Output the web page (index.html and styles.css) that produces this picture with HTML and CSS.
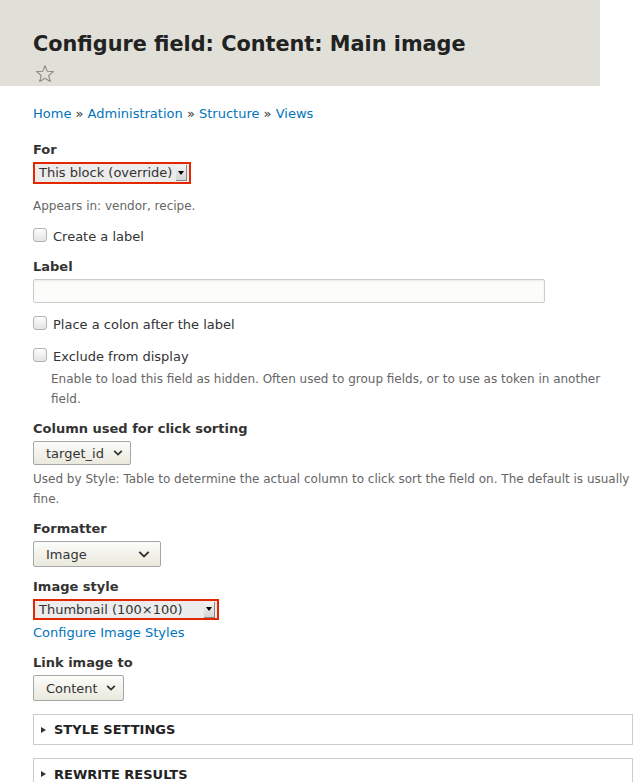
FILE: index.html
```html
<!DOCTYPE html>
<html lang="en">
<head>
<meta charset="utf-8">
<title>Configure field</title>
<link rel="stylesheet" href="styles.css">
</head>
<body>
<header class="page-head">
  <h1 class="title">Configure field: Content: Main image</h1>
  <svg class="star" width="20" height="20" viewBox="0 0 20 20" aria-hidden="true">
    <path d="M10 1.6 L12.3 7.3 L18.4 7.6 L13.7 11.5 L15.3 17.5 L10 14.2 L4.7 17.5 L6.3 11.5 L1.6 7.6 L7.7 7.3 Z" fill="none" stroke="#8e8e86" stroke-width="1.1" stroke-linejoin="round"/>
  </svg>
</header>
<main class="content">
  <nav class="breadcrumb">
    <a href="#">Home</a> » <a href="#">Administration</a> » <a href="#">Structure</a> » <a href="#">Views</a>
  </nav>

  <div class="item item-for">
    <div class="label">For</div>
    <div class="oldselect w-for"><span class="os-text">This block (override)</span><span class="os-btn"><span class="tri"></span></span></div>
    <div class="desc desc-appears">Appears in: vendor, recipe.</div>
  </div>

  <div class="check check-create"><span class="box"></span><span class="check-text">Create a label</span></div>

  <div class="item item-label">
    <div class="label">Label</div>
    <div class="textinput"></div>
  </div>

  <div class="check check-colon"><span class="box"></span><span class="check-text">Place a colon after the label</span></div>

  <div class="check check-exclude"><span class="box"></span><span class="check-text">Exclude from display</span></div>
  <div class="desc desc-indent">Enable to load this field as hidden. Often used to group fields, or to use as token in another field.</div>

  <div class="item item-col">
    <div class="label">Column used for click sorting</div>
    <div class="select w-target"><span>target_id</span><svg class="chev" width="10" height="8" viewBox="0 0 10 8"><path d="M1.2 1.8 L5 5.6 L8.8 1.8" fill="none" stroke="#333" stroke-width="1.8"/></svg></div>
    <div class="desc desc-col">Used by Style: Table to determine the actual column to click sort the field on. The default is usually fine.</div>
  </div>

  <div class="item item-fmt">
    <div class="label">Formatter</div>
    <div class="select w-fmt"><span>Image</span><svg class="chev" width="12" height="9" viewBox="0 0 12 9"><path d="M1.3 1.8 L6 6.5 L10.7 1.8" fill="none" stroke="#333" stroke-width="1.9"/></svg></div>
  </div>

  <div class="item item-style">
    <div class="label">Image style</div>
    <div class="oldselect w-style"><span class="os-text">Thumbnail (100×100)</span><span class="os-btn"><span class="tri"></span></span></div>
    <a class="link-cfg" href="#">Configure Image Styles</a>
  </div>

  <div class="item item-link">
    <div class="label">Link image to</div>
    <div class="select w-link"><span>Content</span><svg class="chev" width="10" height="8" viewBox="0 0 10 8"><path d="M1.2 1.8 L5 5.6 L8.8 1.8" fill="none" stroke="#333" stroke-width="1.8"/></svg></div>
  </div>

  <div class="details"><span class="dtri"></span><span class="summary">Style settings</span></div>
  <div class="details details-2"><span class="dtri"></span><span class="summary">Rewrite results</span></div>
</main>
</body>
</html>
```

FILE: styles.css
```css
html, body {
  margin: 0;
  padding: 0;
  background: #fff;
  overflow: hidden;
}
body {
  font-family: "DejaVu Sans", sans-serif;
  font-size: 13px;
  color: #333;
  width: 633px;
}
.page-head {
  width: 600px;
  height: 86px;
  box-sizing: border-box;
  background: #e0e0d8;
  padding: 31px 0 0 33px;
}
.title {
  margin: 0;
  font-size: 20.8px;
  line-height: 26px;
  font-weight: bold;
  color: #222;
}
.star {
  display: block;
  margin: 7px 0 0 2px;
}
.content {
  padding: 18px 0 0 33px;
}
a {
  color: #0074bd;
  text-decoration: none;
}
.breadcrumb {
  line-height: 20px;
  color: #333;
}
.item {
  margin-top: 16px;
}
.label {
  font-weight: bold;
  line-height: 20px;
  color: #333;
}
.oldselect {
  margin-top: 2px;
  box-sizing: border-box;
  height: 22px;
  border: 2px solid #e32700;
  background: #ececec;
  display: flex;
  align-items: center;
  justify-content: space-between;
  padding: 0 2px 0 4px;
  color: #333;
}
.w-for { width: 158px; }
.w-style { width: 186px; height: 21px; }
.os-text {
  line-height: 16px;
}
.os-btn {
  width: 11px;
  height: 16px;
  box-sizing: border-box;
  background: linear-gradient(#f4f4f4, #d4d4d4);
  border-right: 1px solid #888;
  border-bottom: 1px solid #888;
  display: flex;
  align-items: center;
  justify-content: center;
}
.tri {
  width: 0;
  height: 0;
  border-left: 3px solid transparent;
  border-right: 3px solid transparent;
  border-top: 4px solid #000;
}
.desc {
  font-size: 12px;
  line-height: 20px;
  color: #666;
}
.desc-appears {
  margin-top: 12px;
}
.check {
  display: flex;
  align-items: center;
  margin-top: 10px;
  line-height: 20px;
}
.check-create {
  margin-top: 11px;
}
.box {
  width: 14px;
  height: 14px;
  box-sizing: border-box;
  border: 1px solid #b3b3b3;
  border-radius: 3px;
  background: linear-gradient(#fdfdfd, #e4e4e4);
  margin-right: 6px;
  position: relative;
  top: -2px;
}
.item-label {
  margin-top: 10px;
}
.textinput {
  margin-top: 2px;
  width: 512px;
  height: 24px;
  box-sizing: border-box;
  border: 1px solid #ccc;
  border-radius: 2px;
  background: #fcfcfa;
  box-shadow: inset 0 1px 2px rgba(0,0,0,0.08);
}
.check-colon {
  margin-top: 12px;
}
.check-exclude {
  margin-top: 12px;
}
.desc-indent {
  margin-top: 2px;
  padding-left: 18px;
  padding-right: 20px;
}
.item-col {
  margin-top: 10px;
}
.select {
  margin-top: 2px;
  box-sizing: border-box;
  height: 24px;
  border: 1px solid #a6a6a6;
  border-radius: 2px;
  background: linear-gradient(#fcfcfa, #e9e9dd);
  display: flex;
  align-items: center;
  justify-content: space-between;
  padding: 0 7px 0 12px;
  color: #333;
}
.w-target { width: 98px; }
.w-fmt { width: 128px; height: 26px; padding-right: 10px; }
.w-link { width: 91px; height: 26px; }
.desc-col {
  margin-top: 4px;
}
.item-fmt { margin-top: 10px; }
.item-style { margin-top: 10px; }
.link-cfg {
  display: block;
  line-height: 20px;
  margin-top: 3px;
}
.item-link { margin-top: 10px; }
.details {
  margin-top: 13px;
  box-sizing: border-box;
  width: 600px;
  height: 31px;
  border: 1px solid #ccc;
  display: flex;
  align-items: center;
  padding-left: 7px;
}
.details-2 {
  margin-top: 13px;
  height: 40px;
  align-items: flex-start;
  padding-top: 7px;
}
.dtri {
  width: 0;
  height: 0;
  border-top: 3.5px solid transparent;
  border-bottom: 3.5px solid transparent;
  border-left: 5px solid #333;
  margin-right: 8px;
}
.details-2 .dtri { margin-top: 5px; }
.summary {
  font-weight: bold;
  text-transform: uppercase;
  color: #222;
  line-height: 17px;
}
```
